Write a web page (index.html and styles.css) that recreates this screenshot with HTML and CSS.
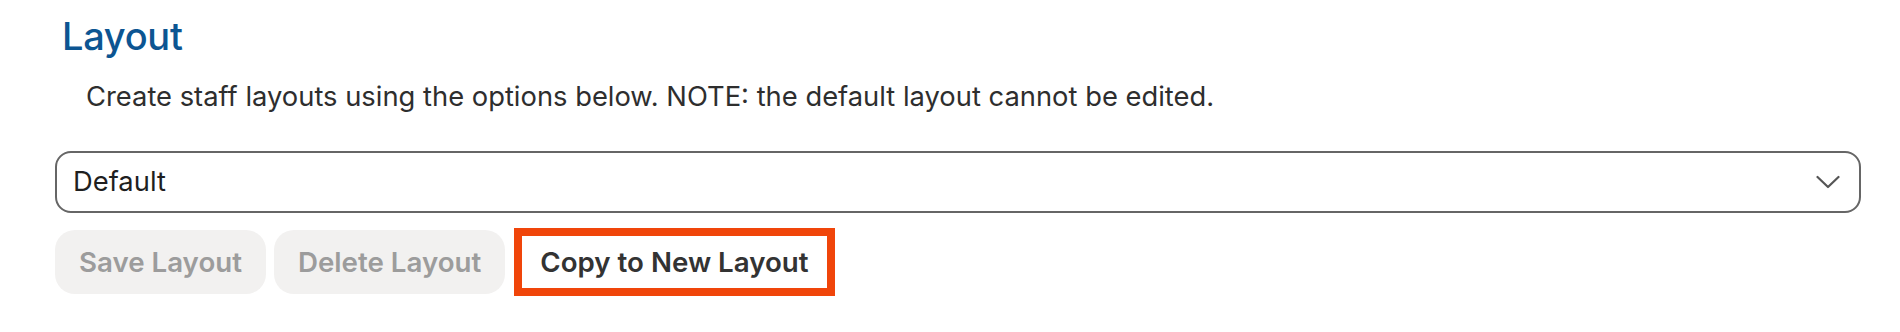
FILE: index.html
```html
<!DOCTYPE html>
<html lang="en">
<head>
<meta charset="utf-8">
<title>Layout</title>
<link rel="stylesheet" href="styles.css">
</head>
<body>
<main class="page">
  <h1 class="title">Layout</h1>
  <p class="intro">Create staff layouts using the options below. NOTE: the default layout cannot be edited.</p>
  <div class="select">
    <span class="select-value">Default</span>
    <svg class="chevron" width="24" height="14" viewBox="0 0 24 14" aria-hidden="true">
      <path d="M1.5 2 L12 12 L22.5 2" fill="none" stroke="#555" stroke-width="2.2" stroke-linecap="round" stroke-linejoin="round"/>
    </svg>
  </div>
  <div class="actions">
    <button class="btn btn-disabled" type="button">Save Layout</button>
    <button class="btn btn-disabled" type="button">Delete Layout</button>
    <button class="btn btn-highlight" type="button">Copy to New Layout</button>
  </div>
</main>
</body>
</html>
```

FILE: styles.css
```css
html, body {
  margin: 0;
  padding: 0;
  background: #ffffff;
}

body {
  font-family: Inter, "Liberation Sans", Arial, sans-serif;
  color: #2e2e2e;
}

.page {
  padding: 12px 39px 0 55px;
}

.title {
  margin: 0 0 0 7px;
  font-size: 38px;
  line-height: 48px;
  font-weight: 500;
  color: #0c5592;
  letter-spacing: -0.3px;
}

.intro {
  margin: 19px 0 0 31px;
  font-size: 27.35px;
  line-height: 36px;
  font-weight: 400;
  color: #2e2e2e;
}

.select {
  margin-top: 36px;
  height: 62px;
  box-sizing: border-box;
  border: 2px solid #666666;
  border-radius: 16px;
  display: flex;
  align-items: center;
  justify-content: space-between;
  padding: 0 19px 0 16px;
}

.select-value {
  font-size: 27.35px;
  line-height: 36px;
  color: #1f1f1f;
}

.chevron {
  display: block;
}

.actions {
  margin-top: 15px;
  display: flex;
  align-items: center;
}

.btn {
  font-family: Inter, "Liberation Sans", Arial, sans-serif;
  font-size: 27.7px;
  font-weight: 600;
  line-height: 36px;
  height: 64px;
  box-sizing: border-box;
  border: none;
  border-radius: 20px;
  padding: 0 24px;
  cursor: pointer;
}

.btn-disabled {
  background: #f2f1f0;
  color: #9c9c9c;
  margin-right: 8px;
}

.btn-highlight {
  height: 68px;
  margin-left: 1px;
  background: #ffffff;
  color: #333333;
  border: 8px solid #f0450a;
  border-radius: 0;
  padding: 0 18px;
}
```
